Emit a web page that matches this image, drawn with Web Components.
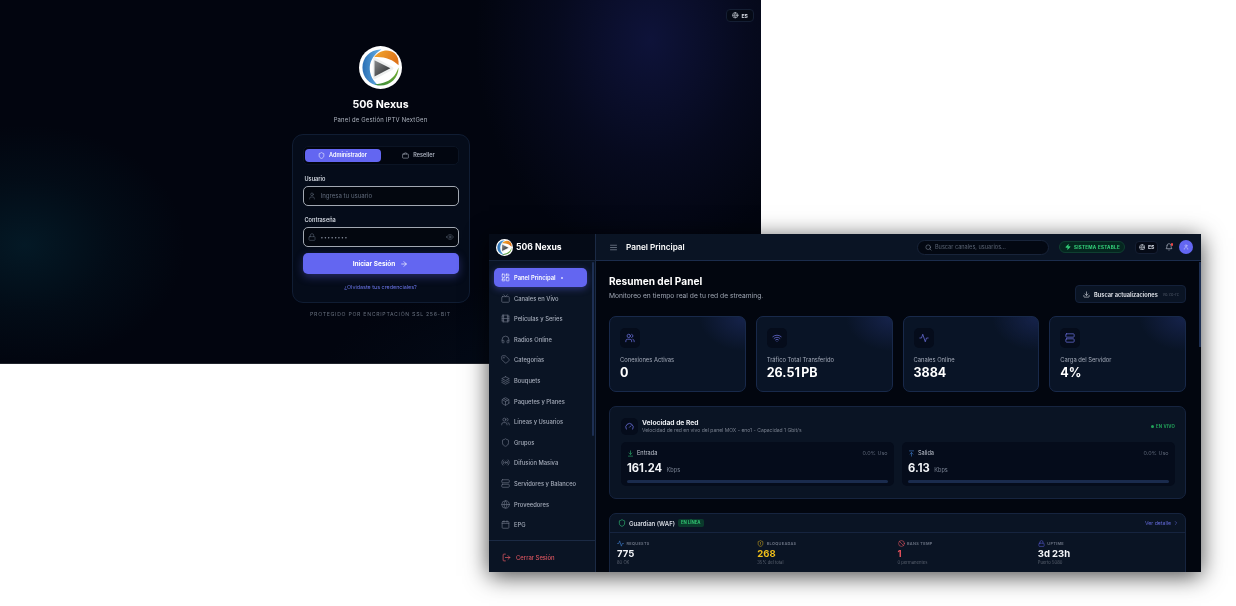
<!DOCTYPE html>
<html lang="es">
<head>
<meta charset="utf-8">
<title>506 Nexus</title>
<style>
  html, body { margin: 0; height: 100%; background: #fff; overflow: hidden; }
  body { position: relative; width: 1236px; height: 606px; font-family: Inter, "Liberation Sans", sans-serif; }
</style>
</head>
<body>
<login-window></login-window>
<dash-window></dash-window>

<script>
const ICONS = {
  dashboard: '<rect x="3" y="3" width="7" height="9" rx="1"/><rect x="14" y="3" width="7" height="5" rx="1"/><rect x="14" y="12" width="7" height="9" rx="1"/><rect x="3" y="16" width="7" height="5" rx="1"/>',
  tv: '<rect x="2" y="7" width="20" height="15" rx="2"/><polyline points="17 2 12 7 7 2"/>',
  film: '<rect x="3" y="3" width="18" height="18" rx="2"/><path d="M7 3v18M3 7.5h4M3 12h18M3 16.5h4M17 3v18M17 7.5h4M17 16.5h4"/>',
  headphones: '<path d="M3 14h3a2 2 0 0 1 2 2v3a2 2 0 0 1-2 2H5a2 2 0 0 1-2-2v-7a9 9 0 0 1 18 0v7a2 2 0 0 1-2 2h-1a2 2 0 0 1-2-2v-3a2 2 0 0 1 2-2h3"/>',
  tag: '<path d="M12.586 2.586A2 2 0 0 0 11.172 2H4a2 2 0 0 0-2 2v7.172a2 2 0 0 0 .586 1.414l8.704 8.704a2.426 2.426 0 0 0 3.42 0l6.58-6.58a2.426 2.426 0 0 0 0-3.42z"/><circle cx="7.5" cy="7.5" r=".5"/>',
  layers: '<path d="M12 2 2 7l10 5 10-5-10-5z"/><path d="M2 17l10 5 10-5"/><path d="M2 12l10 5 10-5"/>',
  box: '<path d="M16.5 9.4 7.55 4.24"/><path d="M21 16V8a2 2 0 0 0-1-1.73l-7-4a2 2 0 0 0-2 0l-7 4A2 2 0 0 0 3 8v8a2 2 0 0 0 1 1.73l7 4a2 2 0 0 0 2 0l7-4A2 2 0 0 0 21 16z"/><polyline points="3.29 7 12 12 20.71 7"/><path d="M12 22V12"/>',
  users: '<path d="M16 21v-2a4 4 0 0 0-4-4H6a4 4 0 0 0-4 4v2"/><circle cx="9" cy="7" r="4"/><path d="M22 21v-2a4 4 0 0 0-3-3.87"/><path d="M16 3.13a4 4 0 0 1 0 7.75"/>',
  shield: '<path d="M20 13c0 5-3.5 7.5-7.66 8.95a1 1 0 0 1-.67-.01C7.5 20.5 4 18 4 13V6a1 1 0 0 1 1-1c2 0 4.5-1.2 6.24-2.72a1.17 1.17 0 0 1 1.52 0C14.51 3.81 17 5 19 5a1 1 0 0 1 1 1z"/>',
  radio: '<path d="M4.9 19.1C1 15.2 1 8.8 4.9 4.9"/><path d="M7.8 16.2c-2.3-2.3-2.3-6.1 0-8.5"/><circle cx="12" cy="12" r="2"/><path d="M16.2 7.8c2.3 2.3 2.3 6.1 0 8.5"/><path d="M19.1 4.9C23 8.8 23 15.1 19.1 19"/>',
  server: '<rect x="2" y="2" width="20" height="8" rx="2"/><rect x="2" y="14" width="20" height="8" rx="2"/>',
  globe: '<circle cx="12" cy="12" r="10"/><path d="M12 2a14.5 14.5 0 0 0 0 20 14.5 14.5 0 0 0 0-20"/><path d="M2 12h20"/>',
  calendar: '<rect x="3" y="4" width="18" height="18" rx="2"/><path d="M16 2v4M8 2v4M3 9h18"/>',
  logout: '<path d="M9 21H5a2 2 0 0 1-2-2V5a2 2 0 0 1 2-2h4"/><polyline points="16 17 21 12 16 7"/><path d="M21 12H9"/>',
  menu: '<path d="M4 6h16M4 12h16M4 18h16"/>',
  search: '<circle cx="11" cy="11" r="8"/><path d="m21 21-4.3-4.3"/>',
  zap: '<path d="M4 14a1 1 0 0 1-.78-1.63l9.9-10.2a.5.5 0 0 1 .86.46l-1.92 6.02A1 1 0 0 0 13 10h7a1 1 0 0 1 .78 1.63l-9.9 10.2a.5.5 0 0 1-.86-.46l1.92-6.02A1 1 0 0 0 11 14z"/>',
  bell: '<path d="M10.3 21a1.94 1.94 0 0 0 3.4 0"/><path d="M6 8a6 6 0 0 1 12 0c0 7 3 9 3 9H3s3-2 3-9"/>',
  user: '<path d="M19 21v-2a4 4 0 0 0-4-4H9a4 4 0 0 0-4 4v2"/><circle cx="12" cy="7" r="4"/>',
  download: '<path d="M21 15v4a2 2 0 0 1-2 2H5a2 2 0 0 1-2-2v-4"/><polyline points="7 10 12 15 17 10"/><path d="M12 15V3"/>',
  activity: '<path d="M22 12h-4l-3 9L9 3l-3 9H2"/>',
  wifi: '<path d="M12 20h.01"/><path d="M2 8.82a15 15 0 0 1 20 0"/><path d="M5 12.859a10 10 0 0 1 14 0"/><path d="M8.5 16.429a5 5 0 0 1 7 0"/>',
  gauge: '<path d="m12 14 4-4"/><path d="M3.34 19a10 10 0 1 1 17.32 0"/>',
  arrowDown: '<path d="M12 3v12"/><path d="m7 10 5 5 5-5"/><path d="M5 21h14"/>',
  arrowUp: '<path d="M12 21V9"/><path d="m7 14 5-5 5 5"/><path d="M5 3h14"/>',
  arrowRight: '<path d="M5 12h14"/><path d="m12 5 7 7-7 7"/>',
  chevron: '<path d="m9 18 6-6-6-6"/>',
  ban: '<circle cx="12" cy="12" r="10"/><path d="m4.9 4.9 14.2 14.2"/>',
  lock: '<rect x="3" y="11" width="18" height="11" rx="2"/><path d="M7 11V7a5 5 0 0 1 10 0v4"/>',
  eye: '<path d="M2 12s3-7 10-7 10 7 10 7-3 7-10 7-10-7-10-7Z"/><circle cx="12" cy="12" r="3"/>',
  bag: '<rect x="2" y="7" width="20" height="14" rx="2"/><path d="M16 7V5a2 2 0 0 0-2-2h-4a2 2 0 0 0-2 2v2"/>',
  shieldClock: '<path d="M20 13c0 5-3.5 7.5-7.66 8.95a1 1 0 0 1-.67-.01C7.5 20.5 4 18 4 13V6a1 1 0 0 1 1-1c2 0 4.5-1.2 6.24-2.72a1.17 1.17 0 0 1 1.52 0C14.51 3.81 17 5 19 5a1 1 0 0 1 1 1z"/><path d="M12 8v4M12 16h.01"/>'
};

class UiIcon extends HTMLElement {
  connectedCallback() {
    const size = this.getAttribute('size') || 8;
    const sw = this.getAttribute('sw') || 2;
    this.attachShadow({ mode: 'open' });
    this.shadowRoot.innerHTML = `
      <style>
        :host { display: inline-flex; flex: none; width: ${size}px; height: ${size}px; color: ${this.getAttribute('color') || 'currentColor'}; }
        svg { width: 100%; height: 100%; display: block; fill: ${this.hasAttribute('solid') ? 'currentColor' : 'none'}; stroke: currentColor; stroke-width: ${sw}; stroke-linecap: round; stroke-linejoin: round; }
      </style>
      <svg viewBox="0 0 24 24">${ICONS[this.getAttribute('name')] || ''}</svg>`;
  }
}

class AppLogo extends HTMLElement {
  connectedCallback() {
    const size = this.getAttribute('size') || 42;
    this.attachShadow({ mode: 'open' });
    this.shadowRoot.innerHTML = `
      <style>
        :host { display: block; flex: none; width: ${size}px; height: ${size}px; }
        svg { width: 100%; height: 100%; display: block; }
      </style>
      <svg viewBox="0 0 100 100">
        <defs>
          <linearGradient id="blue" x1="0" y1="0" x2="1" y2="0"><stop offset="0" stop-color="#2a6fb5"/><stop offset="1" stop-color="#69b3e6"/></linearGradient>
          <linearGradient id="orange" x1="0" y1="0" x2="1" y2="0.4"><stop offset="0" stop-color="#f3a92f"/><stop offset="1" stop-color="#df7418"/></linearGradient>
          <linearGradient id="green" x1="1" y1="0" x2="0" y2="1"><stop offset="0" stop-color="#74ad2f"/><stop offset="1" stop-color="#3b8b3c"/></linearGradient>
          <linearGradient id="play" x1="0" y1="0" x2="1" y2="1"><stop offset="0" stop-color="#8a8c8e"/><stop offset="1" stop-color="#232628"/></linearGradient>
        </defs>
        <circle cx="50" cy="50" r="50" fill="#fff"/>
        <path d="M52 8C26 7 8 27 8 50c0 22 16 40 38 42-13-9-22-25-21-43C26 33 36 18 52 8z" fill="url(#blue)"/>
        <path d="M35 26C46 11 68 4 83 17c7 6 10 16 9 28-14-14-34-21-57-19z" fill="url(#orange)"/>
        <path d="M92 50c0 24-19 42-42 42-5 0-10-1-14-3 20-1 36-8 46-20 4-5 7-12 10-19z" fill="url(#green)"/>
        <path d="M32 32c0-4 4-6 7-4l39 21c3 2 3 5 0 6L39 76c-3 2-7 0-7-4z" fill="#eef0f0"/>
        <path d="M36 33v38l37-19z" fill="url(#play)"/>
      </svg>`;
  }
}

class LangChip extends HTMLElement {
  connectedCallback() {
    this.attachShadow({ mode: 'open' });
    this.shadowRoot.innerHTML = `
      <style>
        :host { display: inline-flex; align-items: center; gap: 2.5px; box-sizing: border-box; height: 13px; padding: 0 ${this.hasAttribute('compact') ? '2.5px' : '5px'}; border-radius: 4px; background: #050a16; border: 1px solid #141e33; color: #d5dae4; font-size: 5.2px; font-weight: 700; }
      </style>
      <ui-icon name="globe" size="6.5"></ui-icon>ES`;
  }
}

class LoginField extends HTMLElement {
  connectedCallback() {
    const password = this.hasAttribute('password');
    this.attachShadow({ mode: 'open' });
    this.shadowRoot.innerHTML = `
      <style>
        :host { display: block; }
        label { display: block; font-size: 5.6px; font-weight: 600; color: #d4d9e2; margin: 0 0 3.5px 2px; line-height: 7px; }
        .box { height: 19.5px; box-sizing: border-box; display: flex; align-items: center; gap: 4.5px; padding: 0 4px 0 4.5px; border: 1px solid #a2a8b2; border-radius: 5px; background: #03070f; color: #616b7c; font-size: 6.1px; }
        .text { flex: 1; ${password ? 'font-size: 5px; letter-spacing: .6px; color: #8a92a0;' : ''} }
      </style>
      <label>${this.getAttribute('label')}</label>
      <div class="box">
        <ui-icon name="${password ? 'lock' : 'user'}" size="8" sw="1.6"></ui-icon>
        <span class="text">${this.getAttribute('text')}</span>
        ${password ? '<ui-icon name="eye" size="8" sw="1.6"></ui-icon>' : ''}
      </div>`;
  }
}

class LoginWindow extends HTMLElement {
  connectedCallback() {
    this.attachShadow({ mode: 'open' });
    this.shadowRoot.innerHTML = `
      <style>
        :host {
          position: absolute; left: 0; top: 0; width: 761px; height: 364px; box-sizing: border-box;
          display: flex; flex-direction: column; align-items: center; padding-top: 46px;
          color: #fff; overflow: hidden; border-bottom: 1px solid #20242c; filter: blur(.3px);
          background:
            radial-gradient(ellipse 175px 220px at 650px 40px, rgba(24,30,92,.55), rgba(24,30,92,.2) 55%, transparent 100%),
            radial-gradient(ellipse 160px 120px at 25px 245px, rgba(6,52,68,.42), rgba(6,52,68,.15) 55%, transparent 100%),
            radial-gradient(ellipse 240px 100px at 560px 380px, rgba(8,34,60,.25), transparent 100%),
            #02050f;
        }
        .lang { position: absolute; top: 9px; right: 7px; }
        h1 { margin: 9px 0 0; font-size: 10.6px; line-height: 14px; font-weight: 700; }
        p { margin: 2.5px 0 0; font-size: 5.9px; line-height: 9px; color: #aeb4bf; letter-spacing: .2px; }
        .card { box-sizing: border-box; width: 178px; height: 169px; margin-top: 10px; padding: 11px 10px 0; border-radius: 11px; background: #050c1a; border: 1px solid #101d33; display: flex; flex-direction: column; }
        .tabs { display: grid; grid-template-columns: 1fr 1fr; height: 19px; flex: none; box-sizing: border-box; padding: 2px 1px; border-radius: 5px; background: #020610; border: 1px solid #0b1424; }
        .tab { display: flex; align-items: center; justify-content: center; gap: 4px; font-size: 5.5px; font-weight: 600; color: #a9afbc; border-radius: 4px; }
        .tab.on { background: #6366f1; color: #fff; }
        login-field:nth-of-type(1) { margin-top: 11px; }
        login-field:nth-of-type(2) { margin-top: 11px; }
        .submit { margin-top: 6.5px; height: 21px; flex: none; border-radius: 5px; background: #6366f1; box-shadow: 0 3px 9px rgba(99,102,241,.35); display: flex; align-items: center; justify-content: center; gap: 5px; font-size: 6.5px; font-weight: 700; }
        .forgot { margin-top: 9.5px; text-align: center; font-size: 5.4px; line-height: 7px; color: #6a74e8; }
        .foot { margin-top: 8px; font-size: 5.2px; line-height: 7px; letter-spacing: .7px; color: #666e7c; }
      </style>
      <lang-chip class="lang"></lang-chip>
      <app-logo size="43"></app-logo>
      <h1>506 Nexus</h1>
      <p>Panel de Gestión IPTV NextGen</p>
      <div class="card">
        <div class="tabs">
          <div class="tab on"><ui-icon name="shield" size="7"></ui-icon>Administrador</div>
          <div class="tab"><ui-icon name="bag" size="7"></ui-icon>Reseller</div>
        </div>
        <login-field label="Usuario" text="Ingresa tu usuario"></login-field>
        <login-field label="Contraseña" text="••••••••" password></login-field>
        <div class="submit">Iniciar Sesión <ui-icon name="arrowRight" size="8"></ui-icon></div>
        <div class="forgot">¿Olvidaste tus credenciales?</div>
      </div>
      <div class="foot">PROTEGIDO POR ENCRIPTACIÓN SSL 256-BIT</div>`;
  }
}

class NavItem extends HTMLElement {
  connectedCallback() {
    const on = this.hasAttribute('active');
    this.attachShadow({ mode: 'open' });
    this.shadowRoot.innerHTML = `
      <style>
        :host { display: flex; align-items: center; gap: 4.5px; height: 19px; margin-bottom: 1.6px; padding: 0 0 0 6.5px; border-radius: 5px; font-size: 5.8px; font-weight: ${on ? 600 : 500}; color: ${on ? '#fff' : '#a5acba'}; ${on ? 'background:#6366f1;box-shadow:0 2px 7px rgba(99,102,241,.4);' : ''} }
        .dot { width: 2px; height: 2px; border-radius: 50%; background: #d7d9ff; margin-left: 1px; }
      </style>
      <ui-icon name="${this.getAttribute('icon')}" size="9" sw="1.7" color="${on ? '#fff' : '#6f7889'}"></ui-icon>
      <slot></slot>${on ? '<span class="dot"></span>' : ''}`;
  }
}

class DashSidebar extends HTMLElement {
  connectedCallback() {
    this.attachShadow({ mode: 'open' });
    this.shadowRoot.innerHTML = `
      <style>
        :host { position: relative; display: flex; flex-direction: column; width: 107px; flex: none; background: #0a1424; border-right: 1px solid #1b2a44; box-sizing: border-box; }
        .brand { height: 27px; flex: none; display: flex; align-items: center; gap: 3px; padding-left: 7px; background: #050b17; border-bottom: 1px solid #16233a; box-sizing: border-box; font-size: 8.6px; font-weight: 700; color: #fff; }
        nav { flex: 1; padding: 7px 8px 0 5px; min-height: 0; overflow: hidden; }
        .thumb { position: absolute; right: 1px; top: 28px; width: 2px; height: 174px; border-radius: 2px; background: #1d2f53; }
        .out { flex: none; height: 32px; padding-top: 2px; border-top: 1px solid #1b2a44; display: flex; align-items: center; gap: 5px; padding-left: 13px; font-size: 5.9px; font-weight: 500; color: #dc5560; box-sizing: border-box; }
      </style>
      <div class="brand"><app-logo size="17"></app-logo>506 Nexus</div>
      <nav>
        <nav-item icon="dashboard" active>Panel Principal</nav-item>
        <nav-item icon="tv">Canales en Vivo</nav-item>
        <nav-item icon="film">Películas y Series</nav-item>
        <nav-item icon="headphones">Radios Online</nav-item>
        <nav-item icon="tag">Categorías</nav-item>
        <nav-item icon="layers">Bouquets</nav-item>
        <nav-item icon="box">Paquetes y Planes</nav-item>
        <nav-item icon="users">Líneas y Usuarios</nav-item>
        <nav-item icon="shield">Grupos</nav-item>
        <nav-item icon="radio">Difusión Masiva</nav-item>
        <nav-item icon="server">Servidores y Balanceo</nav-item>
        <nav-item icon="globe">Proveedores</nav-item>
        <nav-item icon="calendar">EPG</nav-item>
      </nav>
      <div class="thumb"></div>
      <div class="out"><ui-icon name="logout" size="9" color="#dc5560"></ui-icon>Cerrar Sesión</div>`;
  }
}

class DashTopbar extends HTMLElement {
  connectedCallback() {
    this.attachShadow({ mode: 'open' });
    this.shadowRoot.innerHTML = `
      <style>
        :host { height: 27px; flex: none; box-sizing: border-box; display: flex; align-items: center; padding: 0 8px 0 13px; background: #0a1424; border-bottom: 1px solid #1b2c4c; color: #fff; }
        .title { margin-left: 8px; font-size: 8.2px; font-weight: 600; }
        .search { margin-left: auto; box-sizing: border-box; width: 132px; height: 15px; border-radius: 8px; background: #030812; border: 1px solid #18243a; display: flex; align-items: center; gap: 3px; padding-left: 6.5px; font-size: 5.6px; color: #596272; }
        .status { margin-left: 10px; box-sizing: border-box; height: 12px; width: 66px; justify-content: center; border-radius: 6px; background: #05261f; border: 1px solid #0e3f30; display: flex; align-items: center; gap: 3px; font-size: 4.6px; font-weight: 700; color: #34d27b; letter-spacing: .25px; }
        lang-chip { margin-left: 10px; }
        .bell { position: relative; margin-left: 7px; display: flex; }
        .bell i { position: absolute; right: 0; top: 0; width: 2.5px; height: 2.5px; border-radius: 50%; background: #ef4444; }
        .avatar { margin-left: 6px; width: 14px; height: 14px; border-radius: 50%; background: #6366f1; display: flex; align-items: center; justify-content: center; }
      </style>
      <ui-icon name="menu" size="9" color="#7b8494"></ui-icon>
      <div class="title">Panel Principal</div>
      <div class="search"><ui-icon name="search" size="7" color="#7b8494"></ui-icon>Buscar canales, usuarios...</div>
      <div class="status"><ui-icon name="zap" size="6" color="#34d27b" solid></ui-icon>SISTEMA ESTABLE</div>
      <lang-chip compact></lang-chip>
      <div class="bell"><ui-icon name="bell" size="8" color="#aab2c0"></ui-icon><i></i></div>
      <div class="avatar"><ui-icon name="user" size="6" color="#d9dbff"></ui-icon></div>`;
  }
}

class StatCard extends HTMLElement {
  connectedCallback() {
    this.attachShadow({ mode: 'open' });
    this.shadowRoot.innerHTML = `
      <style>
        :host { display: block; height: 76px; box-sizing: border-box; padding: 11px 10px 0 10px; border-radius: 7px; border: 1px solid #18294a; background: radial-gradient(ellipse 46px 34px at 100% 0, #16234c, transparent 100%), #091426; }
        .ic { width: 20px; height: 20px; border-radius: 5px; background: #050c1b; display: flex; align-items: center; justify-content: center; }
        .label { margin-top: 8px; font-size: 5.8px; line-height: 8px; color: #a3aab8; }
        .value { margin-top: 1px; font-size: 12.5px; line-height: 15px; font-weight: 700; color: #fff; word-spacing: -1.6px; }
      </style>
      <div class="ic"><ui-icon name="${this.getAttribute('icon')}" size="10" sw="1.7" color="#6f74e6"></ui-icon></div>
      <div class="label"><slot name="label"></slot></div>
      <div class="value"><slot name="value"></slot></div>`;
  }
}

class SpeedBox extends HTMLElement {
  connectedCallback() {
    const up = this.getAttribute('dir') === 'up';
    this.attachShadow({ mode: 'open' });
    this.shadowRoot.innerHTML = `
      <style>
        :host { display: block; height: 44px; box-sizing: border-box; padding: 7px 6.5px 7px 6px; border-radius: 5px; background: #050c1b; }
        .top { display: flex; align-items: center; gap: 3px; font-size: 5.6px; line-height: 8px; color: #bcc2cd; }
        .use { margin-left: auto; color: #5e6778; font-size: 5.4px; }
        .speed { margin-top: 4.5px; display: flex; align-items: baseline; gap: 4.5px; font-size: 11.2px; line-height: 13px; font-weight: 700; color: #f3f5f8; }
        .speed small { font-size: 5.6px; font-weight: 400; color: #7b8494; }
        .bar { margin-top: 3px; height: 3px; border-radius: 2px; background: #1a2b4d; }
      </style>
      <div class="top"><ui-icon name="${up ? 'arrowUp' : 'arrowDown'}" size="7" color="${up ? '#3f7fd0' : '#2fb872'}"></ui-icon><span>${up ? 'Salida' : 'Entrada'}</span><span class="use">0.0% Uso</span></div>
      <div class="speed">${this.getAttribute('value')}<small>Kbps</small></div>
      <div class="bar"></div>`;
  }
}

class NetPanel extends HTMLElement {
  connectedCallback() {
    this.attachShadow({ mode: 'open' });
    this.shadowRoot.innerHTML = `
      <style>
        :host { display: block; height: 93px; box-sizing: border-box; padding: 11px 10px 0 11px; border-radius: 7px; border: 1px solid #16243f; background: #0a1424; margin-top: 14px; }
        .head { display: flex; align-items: center; gap: 4px; height: 16px; }
        .ic { width: 17px; height: 17px; border-radius: 5px; background: #050c1b; display: flex; align-items: center; justify-content: center; }
        h3 { margin: 0; font-size: 6.7px; line-height: 8px; font-weight: 700; color: #e9ecf1; }
        .sub { font-size: 5px; line-height: 6px; color: #79818f; }
        .live { margin-left: auto; display: flex; align-items: center; gap: 2px; font-size: 4.3px; font-weight: 700; letter-spacing: .2px; color: #22a35a; }
        .live i { width: 3px; height: 3px; border-radius: 50%; background: #22a35a; }
        .grid { display: grid; grid-template-columns: 1fr 1fr; gap: 8px; margin-top: 8px; }
      </style>
      <div class="head">
        <div class="ic"><ui-icon name="gauge" size="9" color="#6f74e6"></ui-icon></div>
        <div><h3>Velocidad de Red</h3><div class="sub">Velocidad de red en vivo del panel MOX - eno1 - Capacidad 1 Gbit/s</div></div>
        <span class="live"><i></i>EN VIVO</span>
      </div>
      <div class="grid">
        <speed-box dir="down" value="161.24"></speed-box>
        <speed-box dir="up" value="6.13"></speed-box>
      </div>`;
  }
}

class WafStat extends HTMLElement {
  connectedCallback() {
    const color = this.getAttribute('color') || '#f3f5f8';
    this.attachShadow({ mode: 'open' });
    this.shadowRoot.innerHTML = `
      <style>
        :host { display: block; }
        .top { display: flex; align-items: center; gap: 2.5px; font-size: 3.9px; line-height: 7px; font-weight: 600; letter-spacing: .3px; color: #6e7686; }
        .val { margin-top: 1px; font-size: 9.5px; line-height: 11px; font-weight: 700; color: ${color}; }
        .sub { font-size: 4.2px; line-height: 6px; color: #59616f; margin-top: .5px; }
      </style>
      <div class="top"><ui-icon name="${this.getAttribute('icon')}" size="7" color="${this.getAttribute('ic')}"></ui-icon>${this.getAttribute('label')}</div>
      <div class="val">${this.getAttribute('value')}</div>
      <div class="sub">${this.getAttribute('sub')}</div>`;
  }
}

class WafPanel extends HTMLElement {
  connectedCallback() {
    this.attachShadow({ mode: 'open' });
    this.shadowRoot.innerHTML = `
      <style>
        :host { display: block; box-sizing: border-box; height: 80px; border-radius: 7px 7px 0 0; border: 1px solid #16243f; background: #0a1424; margin-top: 14px; flex: none; }
        .head { height: 19px; box-sizing: border-box; display: flex; align-items: center; gap: 3px; padding: 0 6px 0 8px; border-bottom: 1px solid #16243f; }
        .name { font-size: 6px; font-weight: 600; color: #d9dde5; }
        .badge { padding: 0 3px; height: 8px; line-height: 8px; border-radius: 2px; background: #0a3a2c; font-size: 4.3px; font-weight: 700; color: #2fc06f; }
        .more { margin-left: auto; display: flex; align-items: center; gap: 2px; font-size: 5.2px; color: #6369d8; }
        .grid { display: grid; grid-template-columns: repeat(4, 1fr); padding: 7px 7px 0; }
      </style>
      <div class="head">
        <ui-icon name="shield" size="8" color="#2fb872"></ui-icon>
        <span class="name">Guardian (WAF)</span><span class="badge">EN LÍNEA</span>
        <span class="more">Ver detalle <ui-icon name="chevron" size="6"></ui-icon></span>
      </div>
      <div class="grid">
        <waf-stat icon="activity" ic="#3f7fd0" label="REQUESTS" value="775" sub="80 OK"></waf-stat>
        <waf-stat icon="shieldClock" ic="#c9a21c" label="BLOQUEADAS" value="268" sub="35% del total" color="#f0bf1a"></waf-stat>
        <waf-stat icon="ban" ic="#d9515d" label="BANS TEMP" value="1" sub="0 permanentes" color="#e4505c"></waf-stat>
        <waf-stat icon="lock" ic="#5257c8" label="UPTIME" value="3d 23h" sub="Puerto 5080"></waf-stat>
      </div>`;
  }
}

class DashWindow extends HTMLElement {
  connectedCallback() {
    this.attachShadow({ mode: 'open' });
    this.shadowRoot.innerHTML = `
      <style>
        :host { position: absolute; left: 489px; top: 234px; width: 712px; height: 338px; display: flex; overflow: hidden; color: #fff; background: #02060f; box-shadow: 0 4px 22px rgba(0,0,0,.72); }
        .main { position: relative; flex: 1; min-width: 0; display: flex; flex-direction: column; filter: blur(.3px); }
        dash-sidebar { filter: blur(.3px); }
        .content { flex: 1; min-height: 0; overflow: hidden; padding: 14px 15px 0 13px; background: #02060f; }
        .head { display: flex; justify-content: space-between; align-items: flex-end; height: 28px; box-sizing: border-box; }
        .intro { align-self: flex-start; }
        h2 { margin: 0; font-size: 10.1px; line-height: 13px; font-weight: 700; }
        .head p { margin: 3.5px 0 0; font-size: 6.7px; line-height: 9px; color: #a0a7b4; }
        .update { box-sizing: border-box; height: 18px; display: flex; align-items: center; gap: 4px; padding: 0 6px 0 7px; border-radius: 4px; background: #0a1424; border: 1px solid #14213a; font-size: 5.7px; font-weight: 600; color: #e4e7ed; }
        .update small { margin-left: 1px; font-size: 3.9px; font-weight: 400; color: #4f5868; }
        .stats { display: grid; grid-template-columns: repeat(4, 1fr); gap: 10px; margin-top: 13px; }
        .thumb { position: absolute; right: 0; top: 28px; width: 2px; height: 85px; background: #1d2f53; }
      </style>
      <dash-sidebar></dash-sidebar>
      <div class="main">
        <dash-topbar></dash-topbar>
        <div class="content">
          <div class="head">
            <div class="intro"><h2>Resumen del Panel</h2><p>Monitoreo en tiempo real de tu red de streaming.</p></div>
            <div class="update"><ui-icon name="download" size="7"></ui-icon>Buscar actualizaciones<small>v0.7.0-rc</small></div>
          </div>
          <div class="stats">
            <stat-card icon="users"><span slot="label">Conexiones Activas</span><span slot="value">0</span></stat-card>
            <stat-card icon="wifi"><span slot="label">Tráfico Total Transferido</span><span slot="value">26.51 PB</span></stat-card>
            <stat-card icon="activity"><span slot="label">Canales Online</span><span slot="value">3884</span></stat-card>
            <stat-card icon="server"><span slot="label">Carga del Servidor</span><span slot="value">4%</span></stat-card>
          </div>
          <net-panel></net-panel>
          <waf-panel></waf-panel>
        </div>
        <div class="thumb"></div>
      </div>`;
  }
}

customElements.define('ui-icon', UiIcon);
customElements.define('app-logo', AppLogo);
customElements.define('lang-chip', LangChip);
customElements.define('login-field', LoginField);
customElements.define('login-window', LoginWindow);
customElements.define('nav-item', NavItem);
customElements.define('dash-sidebar', DashSidebar);
customElements.define('dash-topbar', DashTopbar);
customElements.define('stat-card', StatCard);
customElements.define('speed-box', SpeedBox);
customElements.define('net-panel', NetPanel);
customElements.define('waf-stat', WafStat);
customElements.define('waf-panel', WafPanel);
customElements.define('dash-window', DashWindow);
</script>
</body>
</html>
